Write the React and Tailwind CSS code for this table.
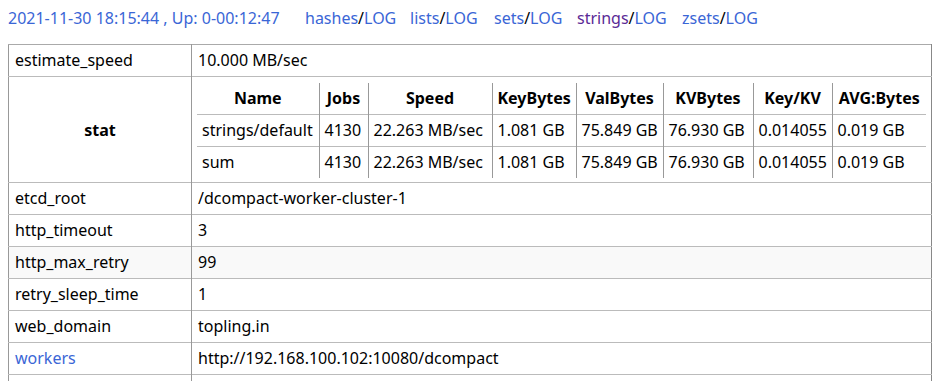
import React from "react";

function Link({ name, purple, w }) {
  return (
    <span className={"inline-block " + w}>
      <span className={purple ? "text-[#5a2a96]" : "text-[#3a66d6]"}>{name}</span>
      <span className="text-black">/</span>
      <span className="text-[#3a66d6]">LOG</span>
    </span>
  );
}

const rows = [
  ["etcd_root", "/dcompact-worker-cluster-1"],
  ["http_timeout", "3"],
  ["http_max_retry", "99", true],
  ["retry_sleep_time", "1"],
  ["web_domain", "topling.in"],
];

const statRows = [
  ["strings/default", "4130", "22.263 MB/sec", "1.081 GB", "75.849 GB", "76.930 GB", "0.014055", "0.019 GB"],
  ["sum", "4130", "22.263 MB/sec", "1.081 GB", "75.849 GB", "76.930 GB", "0.014055", "0.019 GB"],
];
const heads = ["Name", "Jobs", "Speed", "KeyBytes", "ValBytes", "KVBytes", "Key/KV", "AVG:Bytes"];
const widths = ["w-[122px]", "w-[49px]", "w-[124px]", "w-[84px]", "w-[87px]", "w-[90px]", "w-[79px]", "w-[94px]"];

export default function App() {
  return (
    <div className="font-['Noto_Sans','Liberation_Sans',sans-serif] text-[16px] text-black bg-white w-[935px] h-[381px] overflow-hidden">
      <div className="h-[36px] pt-[6px] pl-[8px] leading-[24px] whitespace-nowrap">
        <span className="inline-block w-[297px] text-[#3a66d6]">2021-11-30 18:15:44 , Up: 0-00:12:47</span>
        <Link name="hashes" w="w-[105px]" />
        <Link name="lists" w="w-[84px]" />
        <Link name="sets" w="w-[83px]" />
        <Link name="strings" purple w="w-[105px]" />
        <Link name="zsets" w="w-[80px]" />
      </div>
      <table className="mt-[8px] ml-[8px] w-[924px] table-fixed border-collapse border-t border-t-[#aaa] border-l border-l-[#999] border-r border-r-[#888]">
        <colgroup>
          <col className="w-[183px]" />
          <col />
        </colgroup>
        <tbody>
          <tr className="h-[32px] border-b border-b-[#bbb]">
            <td className="pl-[6px] border-r border-r-[#999] leading-[31px]">estimate_speed</td>
            <td className="pl-[6px] leading-[31px]">10.000 MB/sec</td>
          </tr>
          <tr className="border-b border-b-[#bbb]">
            <td className="text-center font-bold border-r border-r-[#999]">stat</td>
            <td className="pl-[5px] pr-[4px] pt-[6px] pb-[4px]">
              <table className="w-[729px] table-fixed border-collapse">
                <colgroup>
                  {widths.map((w, i) => (
                    <col key={i} className={w} />
                  ))}
                </colgroup>
                <thead>
                  <tr className="h-[31px] border-b border-b-[#bbb]">
                    {heads.map((h, i) => (
                      <th key={h} className={"font-bold text-center leading-[30px] px-[5px] whitespace-nowrap " + (i < 7 ? "border-r border-r-[#999]" : "")}>
                        {h}
                      </th>
                    ))}
                  </tr>
                </thead>
                <tbody>
                  {statRows.map((r, ri) => (
                    <tr key={ri} className={"h-[32px] " + (ri === 0 ? "border-b border-b-[#bbb]" : "")}>
                      {r.map((c, i) => (
                        <td key={i} className={"px-[5px] leading-[31px] whitespace-nowrap " + (i < 7 ? "border-r border-r-[#999]" : "")}>
                          {c}
                        </td>
                      ))}
                    </tr>
                  ))}
                </tbody>
              </table>
            </td>
          </tr>
          {rows.map(([k, v, g]) => (
            <tr key={k} className={"h-[32px] border-b border-b-[#bbb] " + (g ? "bg-[#f9f9f9]" : "")}>
              <td className="pl-[6px] border-r border-r-[#999] leading-[31px]">{k}</td>
              <td className="pl-[6px] leading-[31px]">{v}</td>
            </tr>
          ))}
          <tr className="h-[32px] border-b border-b-[#bbb]">
            <td className="pl-[6px] border-r border-r-[#999] leading-[31px] text-[#3a66d6]">workers</td>
            <td className="pl-[6px] leading-[31px]">http://192.168.100.102:10080/dcompact</td>
          </tr>
          <tr className="h-[32px]">
            <td className="border-r border-r-[#999]"></td>
            <td></td>
          </tr>
        </tbody>
      </table>
    </div>
  );
}
